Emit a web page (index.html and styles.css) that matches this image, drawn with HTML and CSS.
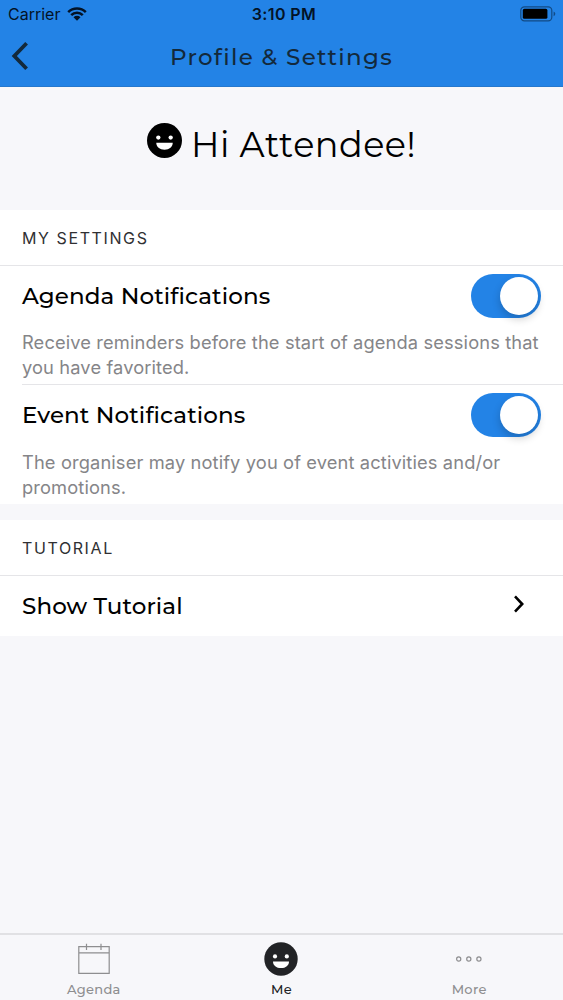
FILE: index.html
```html
<!DOCTYPE html>
<html lang="en">
<head>
  <meta charset="UTF-8">
  <meta name="viewport" content="width=device-width, initial-scale=1.0">
  <title>Profile &amp; Settings</title>
  <link rel="stylesheet" href="styles.css">
</head>
<body>

  <header class="header">
    <div class="status-bar">
      <div class="carrier">
        <span class="carrier-name">Carrier</span>
        <svg class="wifi" width="20" height="14" viewBox="0 0 20 14">
          <path d="M1.2 5.2a12.4 12.4 0 0 1 17.6 0M4.2 8.2a8.2 8.2 0 0 1 11.6 0" fill="none" stroke="#031326" stroke-width="2.5"/>
          <path d="M6.5 10.2a5 5 0 0 1 7 0L10 13.7z" fill="#031326"/>
        </svg>
      </div>
      <span class="time">3:10 PM</span>
      <svg class="battery" width="36" height="16" viewBox="0 0 36 16">
        <rect x="0.8" y="0.8" width="31" height="14" rx="3.6" fill="none" stroke="#124b85" stroke-width="1.2"/>
        <rect x="2.8" y="2.8" width="24.6" height="10" rx="1.6" fill="#000"/>
        <path d="M33.6 5.4q1.7 .7 1.7 2.4t-1.7 2.4z" fill="#124b85"/>
      </svg>
    </div>
    <div class="nav-bar">
      <button type="button" class="back-button" aria-label="Back">
        <svg width="18" height="30" viewBox="0 0 18 30">
          <path d="M15.6 2.2 3.3 15l12.3 12.8" fill="none" stroke="#13293b" stroke-width="3.8"/>
        </svg>
      </button>
      <h1 class="nav-title">Profile &amp; Settings</h1>
    </div>
  </header>

  <main class="content">
    <div class="greeting">
      <svg class="face" width="35" height="35" viewBox="0 0 34 34">
        <circle cx="17" cy="17" r="17"/>
        <circle cx="11" cy="14.2" r="2.1" fill="#fff"/>
        <circle cx="23" cy="14.2" r="2.1" fill="#fff"/>
        <path d="M9 19.2h16c0 4-3.3 6.8-8 6.8s-8-2.8-8-6.8z" fill="#fff"/>
      </svg>
      <h2 class="greeting-text">Hi Attendee!</h2>
    </div>

    <section class="settings">
      <h3 class="section-title">MY SETTINGS</h3>
      <div class="setting">
        <div class="setting-row">
          <span class="setting-name">Agenda Notifications</span>
          <span class="toggle"><span class="knob"></span></span>
        </div>
        <p class="description">Receive reminders before the start of agenda sessions that<br>you have favorited.</p>
      </div>
      <div class="setting">
        <div class="setting-row">
          <span class="setting-name">Event Notifications</span>
          <span class="toggle"><span class="knob"></span></span>
        </div>
        <p class="description">The organiser may notify you of event activities and/or<br>promotions.</p>
      </div>
    </section>

    <section class="tutorial">
      <h3 class="section-title">TUTORIAL</h3>
      <div class="link-row">
        <span class="setting-name">Show Tutorial</span>
        <svg class="chevron" width="12" height="20" viewBox="0 0 12 20">
          <path d="M2 2.4 9.2 10 2 17.6" fill="none" stroke="#000" stroke-width="2.6"/>
        </svg>
      </div>
    </section>
  </main>

  <nav class="tab-bar">
    <div class="tab">
      <svg class="tab-icon" width="34" height="34" viewBox="0 0 34 34" fill="none" stroke="#8e8e90" stroke-width="1.2">
        <path d="M9.6 4.6H24M1.8 10.8h30.4M9 4.6H1.8v26.8h30.4V4.6H24M9.5 1.8V8M24 1.8V8"/>
      </svg>
      <span class="tab-label">Agenda</span>
    </div>
    <div class="tab active">
      <svg class="tab-icon" width="34" height="34" viewBox="0 0 34 34" fill="#222326">
        <circle cx="17" cy="17" r="16.7"/>
        <circle cx="11" cy="14.4" r="2.1" fill="#fff"/>
        <circle cx="22.8" cy="14.4" r="2.1" fill="#fff"/>
        <path d="M9 19.4h16c0 4-3.3 6.6-8 6.6s-8-2.6-8-6.6z" fill="#fff"/>
      </svg>
      <span class="tab-label">Me</span>
    </div>
    <div class="tab">
      <svg class="tab-icon" width="34" height="34" viewBox="0 0 34 34" fill="none" stroke="#8e8e90" stroke-width="1.2">
        <circle cx="6.7" cy="17" r="2.1"/>
        <circle cx="16.8" cy="17" r="2.1"/>
        <circle cx="26.9" cy="17" r="2.1"/>
      </svg>
      <span class="tab-label">More</span>
    </div>
  </nav>

</body>
</html>
```
FILE: styles.css
```css
* {
  box-sizing: border-box;
}

body {
  margin: 0;
  height: 1000px;
  display: flex;
  flex-direction: column;
  overflow: hidden;
  background-color: #f7f7fa;
  color: #000;
  font-family: Inter, Roboto, sans-serif;
}

h1, h2, h3, p {
  margin: 0;
  font-weight: 400;
}

svg {
  display: block;
  flex: none;
}

.nav-title,
.greeting-text,
.setting-name,
.tab-label {
  font-family: Montserrat, Inter, sans-serif;
  font-weight: 500;
  white-space: nowrap;
}

.header {
  height: 87px;
  background-color: #2383e6;
  border-bottom: 1px solid #2678cd;
}

.status-bar {
  display: grid;
  grid-template-columns: 1fr auto 1fr;
  align-items: center;
  height: 28px;
  padding: 0 7px 0 8px;
  font-size: 16px;
  color: #031326;
}

.carrier {
  display: flex;
  align-items: center;
  gap: 7px;
}

.time {
  font-weight: 600;
  letter-spacing: 0.4px;
  padding-left: 4px;
}

.battery {
  justify-self: end;
}

.nav-bar {
  display: grid;
  grid-template-columns: 40px 1fr 40px;
  align-items: center;
  height: 56px;
}

.back-button {
  padding: 0 0 0 11px;
  border: none;
  background: none;
}

.nav-title {
  padding-top: 2px;
  text-align: center;
  font-size: 23px;
  letter-spacing: 1.3px;
  color: #13293b;
}

.content {
  flex: 1;
}

.greeting {
  display: flex;
  justify-content: center;
  gap: 9px;
  height: 123px;
  padding-top: 36px;
}

.greeting-text {
  font-size: 35px;
  font-weight: 400;
  line-height: 43px;
  letter-spacing: 0.5px;
}

.settings,
.tutorial {
  background-color: #fff;
}

.tutorial {
  margin-top: 16px;
}

.section-title {
  height: 56px;
  padding-left: 22px;
  border-bottom: 1px solid #e5e5e8;
  font-size: 16px;
  line-height: 57px;
  letter-spacing: 1.6px;
  color: #303033;
}

.setting {
  height: 118px;
  margin-left: 22px;
  padding-right: 22px;
}

.setting + .setting {
  height: 120px;
  border-top: 1px solid #e5e5e8;
}

.setting + .setting .description {
  padding-top: 5px;
}

.setting-row {
  display: flex;
  align-items: center;
  justify-content: space-between;
  height: 60px;
}

.setting-name {
  font-size: 23px;
  letter-spacing: 0.1px;
}

.toggle {
  display: flex;
  align-items: center;
  justify-content: flex-end;
  width: 70px;
  height: 44px;
  padding-right: 3px;
  border-radius: 22px;
  background-color: #2383e6;
}

.knob {
  width: 38px;
  height: 38px;
  border-radius: 50%;
  background-color: #fff;
  box-shadow: 0 4px 8px rgba(0, 0, 0, 0.2);
}

.description {
  padding-top: 4px;
  font-size: 18.3px;
  line-height: 24.5px;
  letter-spacing: 0.12px;
  white-space: nowrap;
  color: #858588;
}

.link-row {
  display: flex;
  align-items: center;
  justify-content: space-between;
  height: 60px;
  padding: 0 38px 0 22px;
}

.chevron {
  margin-bottom: 4px;
}

.tab-bar {
  display: grid;
  grid-template-columns: repeat(3, 1fr);
  height: 67px;
  border-top: 2px solid #e1e1e4;
}

.tab {
  display: flex;
  flex-direction: column;
  align-items: center;
  padding-top: 7px;
  color: #8e8e90;
}

.active {
  color: #222326;
}

.tab-label {
  margin-top: 4px;
  font-size: 13px;
  line-height: 18px;
  letter-spacing: 0.3px;
}
```
